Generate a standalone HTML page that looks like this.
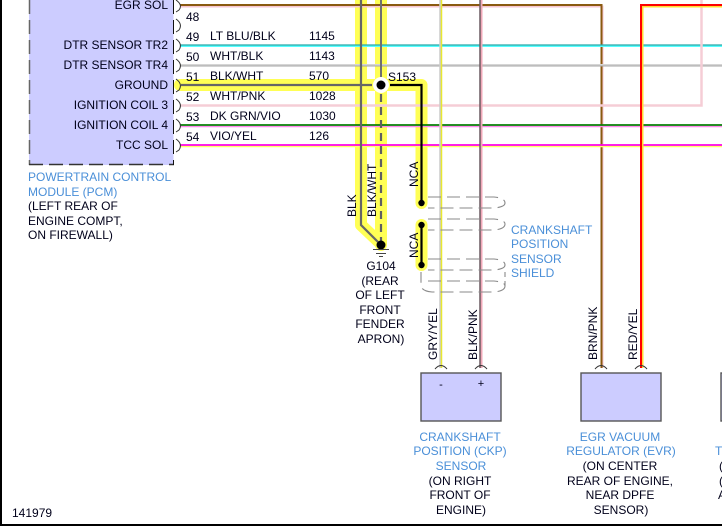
<!DOCTYPE html>
<html><head><meta charset="utf-8"><style>
html,body{margin:0;padding:0;background:#fff;width:722px;height:526px;overflow:hidden}
svg{display:block}
text{font-family:"Liberation Sans",sans-serif;font-size:12px;fill:#00001a}
.b{fill:#4a8fd8}
.m{text-anchor:middle}
.e{text-anchor:end}
</style></head><body>
<svg width="722" height="526" viewBox="0 0 722 526" xmlns="http://www.w3.org/2000/svg">
<rect width="722" height="526" fill="#fff"/>
<!-- PCM -->
<rect x="29" y="-2" width="144.500" height="167" fill="#ccf"/>
<path d="M29.500 0V165" stroke="#666" stroke-width="1.500" fill="none" stroke-dasharray="14 6"/>
<path d="M29 164.500H174" stroke="#333" stroke-width="1.500" fill="none" stroke-dasharray="14 6"/>
<path d="M173.500 0V165" stroke="#111" stroke-width="1" fill="none" stroke-dasharray="14 6"/>
<g>
<text x="168" y="9" class="e">EGR SOL</text>
<text x="168" y="49" class="e">DTR SENSOR TR2</text>
<text x="168" y="69" class="e">DTR SENSOR TR4</text>
<text x="168" y="89" class="e">GROUND</text>
<text x="168" y="109" class="e">IGNITION COIL 3</text>
<text x="168" y="129" class="e">IGNITION COIL 4</text>
<text x="168" y="149" class="e">TCC SOL</text>
</g>
<!-- highlight -->
<g fill="none" stroke="#ffff55" stroke-linejoin="round" stroke-linecap="round">
<path d="M361 0V225L380 243" stroke-width="12"/>
<path d="M381 0V245" stroke-width="12"/>
<path d="M181 85H381" stroke-width="12" stroke-linecap="butt"/>
<path d="M381 85H421.500V203" stroke-width="12"/>
<path d="M421.500 225V265" stroke-width="12"/>
</g>
<circle cx="180" cy="85" r="6" fill="#ffff55"/>
<circle cx="381" cy="85" r="8" fill="#fff"/>
<!-- horizontal wires -->
<g fill="none">
<path d="M180 6.500H602.500V368" stroke="#f5c6d0" stroke-width="2"/>
<path d="M180 5H601.500V368" stroke="#8a5a10" stroke-width="2"/>
<path d="M180 46H722" stroke="#55ffff" stroke-width="2"/>
<path d="M180 45H722" stroke="#2aa8a8" stroke-width="1.200"/>
<path d="M180 65H722" stroke="#d5d5d5" stroke-width="2"/>
<path d="M180 66H722" stroke="#a5a5a5" stroke-width="1"/>
<path d="M180 105.500H701.500V0" stroke="#f5cdd6" stroke-width="2.500"/>
<path d="M180 126.500H722" stroke="#ff88ee" stroke-width="1.500"/>
<path d="M180 125H722" stroke="#078007" stroke-width="1.800"/>
<path d="M180 146.500H722" stroke="#ffff66" stroke-width="1.500"/>
<path d="M180 145H722" stroke="#ff00e6" stroke-width="1.800"/>
<path d="M642.500 368V6.500H722" stroke="#ffdd33" stroke-width="2"/>
<path d="M641 368V5H722" stroke="#ff0000" stroke-width="2"/>
</g>
<!-- wires crossing -->
<g fill="none">
<path d="M361 0V225L378 242" stroke="#666" stroke-width="2.200"/>
<path d="M381 0V77" stroke="#707070" stroke-width="2"/>
<path d="M381 94V245" stroke="#606060" stroke-width="2.200" stroke-dasharray="8 5"/>
<path d="M181 85H372" stroke="#666" stroke-width="2.200"/>
<path d="M390 85H421.500V203" stroke="#000" stroke-width="2.200"/>
<path d="M421.500 225V265" stroke="#000" stroke-width="2.200"/>
<path d="M440.500 0V368" stroke="#ccc" stroke-width="2.500"/>
<path d="M441.500 0V368" stroke="#e8e830" stroke-width="1.500"/>
<path d="M481.500 0V368" stroke="#f0a8b8" stroke-width="2"/>
<path d="M480 0V368" stroke="#6a5a60" stroke-width="1.500"/>
</g>
<!-- connector arcs left -->
<g fill="none" stroke="#333" stroke-width="1">
<path d="M176 0Q183 5 179 10L176 12"/>
<path d="M176 19Q183 24 179 30L176 32"/>
<path d="M176 39Q183 44 179 50L176 52"/>
<path d="M176 59Q183 64 179 70L176 72"/>
<path d="M176 79Q183 84 179 90L176 92"/>
<path d="M176 99Q183 104 179 110L176 112"/>
<path d="M176 119Q183 124 179 130L176 132"/>
<path d="M176 139Q183 144 179 150L176 152"/>
</g>
<g>
<text x="186" y="21">48</text>
<text x="186" y="41">49</text>
<text x="186" y="61">50</text>
<text x="186" y="81">51</text>
<text x="186" y="101">52</text>
<text x="186" y="121">53</text>
<text x="186" y="141">54</text>
<text x="210" y="40">LT BLU/BLK</text>
<text x="210" y="60">WHT/BLK</text>
<text x="210" y="80">BLK/WHT</text>
<text x="210" y="100">WHT/PNK</text>
<text x="210" y="120">DK GRN/VIO</text>
<text x="210" y="140">VIO/YEL</text>
<text x="309" y="40">1145</text>
<text x="309" y="60">1143</text>
<text x="309" y="80">570</text>
<text x="309" y="100">1028</text>
<text x="309" y="120">1030</text>
<text x="309" y="140">126</text>
<text x="388" y="81">S153</text>
</g>
<!-- dots -->
<circle cx="381" cy="85" r="4.500" fill="#000"/>
<circle cx="381" cy="245" r="4.500" fill="#000"/>
<circle cx="421.500" cy="203" r="3.200" fill="#000"/>
<circle cx="421.500" cy="225" r="3.200" fill="#000"/>
<circle cx="421.500" cy="265" r="3.200" fill="#000"/>
<!-- ground -->
<path d="M373 249.500H389M376 253.500H386M379 256.500H383" stroke="#444" stroke-width="1" fill="none"/>
<!-- shields -->
<g fill="none" stroke="#8a8a8a" stroke-width="1.100" stroke-dasharray="13 6">
<path d="M428 197H494Q505 198 505 203Q505 207 494 208H428"/>
<path d="M428 219H494Q505 220 505 224Q505 229 494 230H428"/>
<path d="M428 259H494Q505 260 505 265Q505 269 494 270H428"/>
<path d="M428 281H494Q505 282 505 286Q505 291 494 292H432Q421 291 421 285V272"/>
<path d="M505 272V286" stroke-dasharray="5 4"/>
</g>
<!-- rotated labels -->
<g>
<text transform="translate(356 217) rotate(-90)">BLK</text>
<text transform="translate(376 217) rotate(-90)">BLK/WHT</text>
<text transform="translate(418 187) rotate(-90)">NCA</text>
<text transform="translate(418 258) rotate(-90)">NCA</text>
<text transform="translate(437 360) rotate(-90)">GRY/YEL</text>
<text transform="translate(477 360) rotate(-90)">BLK/PNK</text>
<text transform="translate(597 360) rotate(-90)">BRN/PNK</text>
<text transform="translate(637 360) rotate(-90)">RED/YEL</text>
</g>
<!-- labels -->
<text x="28" y="181" class="b">POWERTRAIN CONTROL</text>
<text x="28" y="196" class="b">MODULE (PCM)</text>
<text x="28" y="210">(LEFT REAR OF</text>
<text x="28" y="225">ENGINE COMPT,</text>
<text x="28" y="239">ON FIREWALL)</text>
<text x="381" y="270" class="m">G104</text>
<text x="380" y="285" class="m">(REAR</text>
<text x="380" y="299" class="m">OF LEFT</text>
<text x="380" y="314" class="m">FRONT</text>
<text x="380" y="328" class="m">FENDER</text>
<text x="381" y="343" class="m">APRON)</text>
<text x="511" y="234" class="b">CRANKSHAFT</text>
<text x="511" y="248" class="b">POSITION</text>
<text x="511" y="263" class="b">SENSOR</text>
<text x="511" y="277" class="b">SHIELD</text>
<!-- connector arcs bottom -->
<g fill="none" stroke="#333" stroke-width="1">
<path d="M435 369Q441 362 447 369"/>
<path d="M475 369Q481 362 487 369"/>
<path d="M595 369Q601 362 607 369"/>
<path d="M635 369Q641 362 647 369"/>
</g>
<!-- sensor boxes -->
<rect x="421" y="373" width="80" height="48" fill="#ccf" stroke="#555" stroke-width="1.400"/>
<rect x="581" y="373" width="80" height="48" fill="#ccf" stroke="#555" stroke-width="1.400"/>
<rect x="721" y="373" width="10" height="48" fill="#ccf" stroke="#555" stroke-width="1.400"/>
<text x="441" y="388" class="m" style="font-size:11px">-</text>
<text x="481" y="387" class="m" style="font-size:11px">+</text>
<text x="460" y="441" class="m b">CRANKSHAFT</text>
<text x="460" y="455" class="m b">POSITION (CKP)</text>
<text x="461" y="470" class="m b">SENSOR</text>
<text x="460" y="485" class="m">(ON RIGHT</text>
<text x="460" y="499" class="m">FRONT OF</text>
<text x="461" y="514" class="m">ENGINE)</text>
<text x="620" y="441" class="m b">EGR VACUUM</text>
<text x="621" y="455" class="m b">REGULATOR (EVR)</text>
<text x="620" y="470" class="m">(ON CENTER</text>
<text x="620" y="485" class="m">REAR OF ENGINE,</text>
<text x="620" y="499" class="m">NEAR DPFE</text>
<text x="621" y="514" class="m">SENSOR)</text>
<text x="715" y="455" class="b">T</text>
<text x="719" y="470">(</text>
<text x="719" y="485">(</text>
<text x="718" y="499">A</text>
<text x="12" y="517">141979</text>
<!-- frame -->
<rect x="0" y="0" width="2" height="526" fill="#000"/>
<rect x="0" y="524" width="722" height="2" fill="#000"/>
</svg>
</body></html>
